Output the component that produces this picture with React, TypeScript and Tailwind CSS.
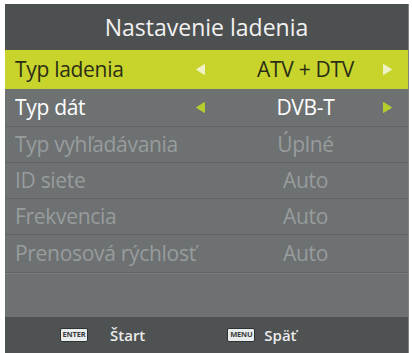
const FONT = { fontFamily: '"Open Sans", "Noto Sans", sans-serif' };

type Row = { label: string; value: string; state: 'active' | 'normal' | 'disabled'; arrows?: boolean; h: string };

const ROWS: Row[] = [
  { label: 'Typ ladenia', value: 'ATV + DTV', state: 'active', arrows: true, h: 'h-[39px]' },
  { label: 'Typ dát', value: 'DVB-T', state: 'normal', arrows: true, h: 'h-[38px]' },
  { label: 'Typ vyhľadávania', value: 'Úplné', state: 'disabled', h: 'h-[36px]' },
  { label: 'ID siete', value: 'Auto', state: 'disabled', h: 'h-[36px]' },
  { label: 'Frekvencia', value: 'Auto', state: 'disabled', h: 'h-[36px]' },
  { label: 'Prenosová rýchlosť', value: 'Auto', state: 'disabled', h: 'h-[38px]' },
];

function Arrow({ dir, color }: { dir: 'left' | 'right'; color: string }) {
  return (
    <svg width="9" height="11" viewBox="0 0 9 11" className="shrink-0">
      <path
        d={dir === 'left' ? 'M8.5 0.5 L0.5 5.5 L8.5 10.5 Z' : 'M0.5 0.5 L8.5 5.5 L0.5 10.5 Z'}
        fill={color}
        stroke={color}
        strokeLinejoin="round"
      />
    </svg>
  );
}

function MenuRow({ row }: { row: Row }) {
  const active = row.state === 'active';
  const text =
    row.state === 'active' ? 'text-[#2b2e14]' : row.state === 'normal' ? 'text-white' : 'text-[#989c9d]';
  const arrowColor = active ? '#eef2c4' : '#b4cc2c';
  return (
    <div
      className={`flex items-center pl-[10px] text-[21px] font-medium tracking-[-0.3px] ${row.h} ${text} ${
        active ? 'bg-[#c8d42c]' : 'border-b border-[#5f6364]'
      }`}
    >
      <span className="w-[181px] shrink-0 leading-none">{row.label}</span>
      <span className="w-[9px] shrink-0 flex">{row.arrows && <Arrow dir="left" color={arrowColor} />}</span>
      <span className="w-[178px] shrink-0 pl-[23px] text-center leading-none">{row.value}</span>
      <span className="w-[9px] shrink-0 flex">{row.arrows && <Arrow dir="right" color={arrowColor} />}</span>
    </div>
  );
}

function KeyBadge({ label }: { label: string }) {
  return (
    <span className="inline-flex items-center justify-center h-[14px] w-[28px] rounded-[2px] bg-[#e9ecec] border border-[#2f3232] text-[7.5px] font-bold leading-none text-[#3a3d3d] tracking-tight">
      {label}
    </span>
  );
}

export default function App() {
  return (
    <div className="w-[412px] h-[353px] bg-white pt-[4px] pl-[5px] pr-[3px]" style={FONT}>
      <div className="flex flex-col h-[349px] bg-[#6d7172] border-r border-[#7d8182]">
        <div className="h-[46px] shrink-0 bg-[#4d5051] flex items-center justify-center text-[23px] text-[#f2f2f2]">
          Nastavenie ladenia
        </div>
        {ROWS.map((r) => (
          <MenuRow key={r.label} row={r} />
        ))}
        <div className="flex-1 border-t border-[#7a7e7f]" />
        <div className="h-[36px] shrink-0 bg-[#4e5252] flex items-center text-[15px] font-semibold text-[#ececec]">
          <span className="ml-[55px] flex">
            <KeyBadge label="ENTER" />
          </span>
          <span className="ml-[22px]">Štart</span>
          <span className="ml-[82px] flex">
            <KeyBadge label="MENU" />
          </span>
          <span className="ml-[9px]">Späť</span>
        </div>
      </div>
    </div>
  );
}
